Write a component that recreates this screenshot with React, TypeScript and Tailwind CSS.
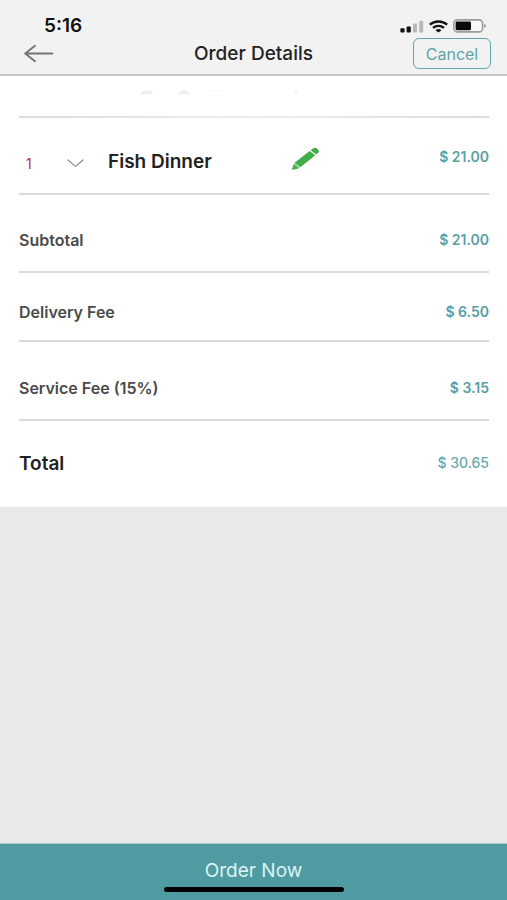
import { useState } from 'react'

type Fee = {
  label: string
  amount: string
  spacing: string
}

const fees: Fee[] = [
  { label: 'Subtotal', amount: '$ 21.00', spacing: 'pt-[35px] pb-[21px]' },
  { label: 'Delivery Fee', amount: '$ 6.50', spacing: 'pt-[29px] pb-[18px]' },
  { label: 'Service Fee (15%)', amount: '$ 3.15', spacing: 'pt-9 pb-[21px]' },
]

function StatusBar() {
  return (
    <div className="flex h-5 items-center justify-between pr-5 pl-11">
      <span className="text-[19px] leading-[22px] font-semibold text-[#111]">5:16</span>
      <div className="flex items-center gap-[5px]">
        {/* Signal */}
        <svg width="24" height="13" viewBox="0 0 24 13" aria-hidden="true">
          <rect x="0.4" y="8.2" width="4.2" height="4.4" rx="1" fill="#111" />
          <rect x="6.6" y="6.4" width="4.2" height="6.2" rx="1" fill="#111" />
          <rect x="13" y="3.6" width="4" height="9" rx="1" fill="#b8b8b8" />
          <rect x="19.2" y="0.8" width="4" height="11.8" rx="1" fill="#b8b8b8" />
        </svg>
        {/* Wifi */}
        <svg width="19" height="13" viewBox="0 0 19 13" fill="none" stroke="#111" strokeWidth="2.3" aria-hidden="true">
          <path d="M0.8 4.7C5.6 0.4 13.4 0.4 18.2 4.7" />
          <path d="M4 7.9C7.2 5.1 11.8 5.1 15 7.9" />
          <path d="M6.5 10.2C8.2 8.7 10.8 8.7 12.5 10.2L9.5 12.6Z" fill="#111" stroke="none" />
        </svg>
        {/* Battery */}
        <svg width="34" height="14" viewBox="0 0 34 14" aria-hidden="true">
          <rect x="0.9" y="0.9" width="28.6" height="12" rx="3.4" fill="#f8f8f8" stroke="#9c9c9c" strokeWidth="1.6" />
          <rect x="2.6" y="2.6" width="15.4" height="8.6" rx="1.4" fill="#0a0a0a" />
          <path d="M31 4.8C33.4 5.4 33.4 8.4 31 9Z" fill="#9c9c9c" />
        </svg>
      </div>
    </div>
  )
}

function PencilIcon() {
  return (
    <svg width="29" height="24" viewBox="0 0 29 24" fill="#43ad49" aria-hidden="true">
      <path d="M19.6 3.3L22 1.4Q22.7 0.8 23.8 0.9L25.6 1.1L27.8 3.8Q28.3 4.6 27.6 5.3L25.3 7.4Z" />
      <path d="M18.6 4.1L24.4 8.2L9.6 20L3.6 15.8Z" />
      <path d="M3.6 15.8L9.6 20L6.8 21.8L2.6 18.2Z" fill="#86cf88" />
      <path d="M2.8 17.2L7.4 21.5L1.8 22.8Q0.9 22.8 1 22Z" />
    </svg>
  )
}

export default function App() {
  const [quantity, setQuantity] = useState('1')

  return (
    <div className="flex min-h-screen flex-col bg-[#e9e9e9] font-['Inter','Liberation_Sans',sans-serif]">
      <header className="border-b-2 border-[#c6c6c6] bg-[#f2f2f2] pt-4 pb-[5px]">
        <StatusBar />
        <div className="mt-0.5 grid grid-cols-[1fr_auto_1fr] items-center px-4">
          <button type="button" aria-label="Back" className="justify-self-start pl-2">
            <svg width="30" height="19" viewBox="0 0 30 19" fill="none" stroke="#757575" strokeWidth="1.9" strokeLinecap="round" strokeLinejoin="round">
              <path d="M1.2 9.5H28.4M11 1.8L1.2 9.5L11 17.2" />
            </svg>
          </button>
          <h1 className="text-[19px] leading-[22px] font-medium text-[#222]">Order Details</h1>
          <button
            type="button"
            className="h-[31px] w-[78px] justify-self-end rounded-md border border-[#5fa5a9] text-[16px] leading-5 text-[#5fa5a9]"
          >
            Cancel
          </button>
        </div>
      </header>

      <main className="bg-white pr-[18px] pl-[19px]">
        {/* Tail of the section scrolled under the header */}
        <div className="h-10 pt-3 pl-[121px]">
          <svg width="160" height="10" viewBox="0 0 160 10" fill="#efefef" aria-hidden="true">
            <path d="M0 7Q1 2 7 2Q13 2 13 7Q7 5 0 7Z" />
            <path d="M39 7Q40 2 44 2Q48 2 49 7Q44 5 39 7Z" />
            <rect x="68" y="2" width="17" height="1" fill="#f8f8f8" />
            <circle cx="156" cy="3" r="1.5" />
          </svg>
        </div>
        <div className="h-0.5 bg-linear-to-r from-[#dcdcdc] via-[#eeeeee] to-[#dcdcdc]" />

        <div className="flex items-start border-b-2 border-[#dadada] pt-[29px] pb-[17px]">
          <div className="relative mt-1 mr-6 w-[65px] shrink-0">
            <select
              aria-label="Quantity"
              value={quantity}
              onChange={(e) => setQuantity(e.target.value)}
              className="h-6 w-full appearance-none bg-transparent pl-[7px] text-[14px] leading-5 text-[#c0264c] outline-none"
            >
              <option>1</option>
              <option>2</option>
              <option>3</option>
            </select>
            <svg className="pointer-events-none absolute top-2 right-0" width="17" height="9" viewBox="0 0 17 9" fill="none" stroke="#8a8a8a" strokeWidth="1.2" strokeLinecap="round" strokeLinejoin="round" aria-hidden="true">
              <path d="M1 1L8.5 7.4L16 1" />
            </svg>
          </div>
          <h2 className="mt-1 flex-1 text-[19px] leading-[22px] font-semibold text-[#222]">Fish Dinner</h2>
          <button type="button" aria-label="Edit Fish Dinner" className="shrink-0">
            <PencilIcon />
          </button>
          <span className="w-[169px] shrink-0 text-right text-[14px] leading-5 font-semibold text-[#58a0a4]">$ 21.00</span>
        </div>

        <dl>
          {fees.map((fee) => (
            <div
              key={fee.label}
              className={`flex justify-between border-b-2 border-[#dadada] font-semibold ${fee.spacing}`}
            >
              <dt className="text-[16px] leading-5 text-[#4a4a4a]">{fee.label}</dt>
              <dd className="text-[14px] leading-5 text-[#58a0a4]">{fee.amount}</dd>
            </div>
          ))}
          <div className="flex justify-between pt-8 pb-8">
            <dt className="text-[19px] leading-[22px] font-semibold text-[#222]">Total</dt>
            <dd className="text-[14px] leading-5 font-medium text-[#6aa9ab]">$ 30.65</dd>
          </div>
        </dl>
      </main>

      <button
        type="button"
        className="mt-auto flex flex-col items-center border-t border-[#a9cfd1] bg-[#509ba1] pt-4 pb-2 text-[19px] leading-[22px] text-[#d9f4f5]"
      >
        Order Now
        <span className="mt-[5px] h-[5px] w-[180px] rounded-full bg-black" />
      </button>
    </div>
  )
}
